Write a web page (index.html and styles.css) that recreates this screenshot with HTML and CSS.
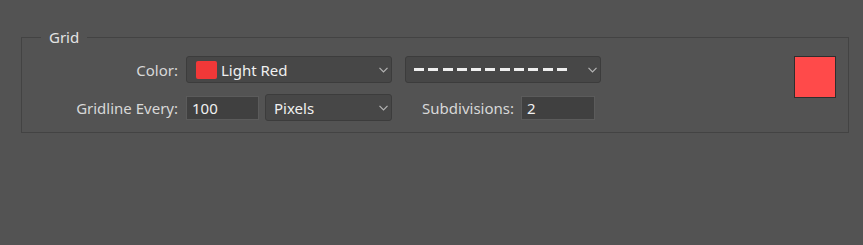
FILE: index.html
```html
<!DOCTYPE html>
<html lang="en">

<head>
    <meta charset="UTF-8">
    <title>Grid</title>
    <link rel="stylesheet" href="styles.css">
</head>

<body>
    <fieldset class="grid-box">
        <legend>Grid</legend>
        <div class="grid-body">
            <div class="grid-rows">
                <!-- 第一行：颜色和线型 -->
                <div class="row">
                    <label class="label">Color:</label>
                    <div class="select select-color">
                        <span class="chip"></span>
                        <span class="value">Light Red</span>
                        <svg class="chevron" width="9" height="6" viewBox="0 0 9 6"><path d="M0.5 0.8 L4.5 4.8 L8.5 0.8" fill="none" stroke="#b4b4b4" stroke-width="1.2"/></svg>
                    </div>
                    <div class="select select-style">
                        <span class="dashes"></span>
                        <svg class="chevron" width="9" height="6" viewBox="0 0 9 6"><path d="M0.5 0.8 L4.5 4.8 L8.5 0.8" fill="none" stroke="#b4b4b4" stroke-width="1.2"/></svg>
                    </div>
                </div>
                <!-- 第二行：间隔和细分 -->
                <div class="row">
                    <label class="label">Gridline Every:</label>
                    <div class="field field-every">100</div>
                    <div class="select select-unit">
                        <span class="value">Pixels</span>
                        <svg class="chevron" width="9" height="6" viewBox="0 0 9 6"><path d="M0.5 0.8 L4.5 4.8 L8.5 0.8" fill="none" stroke="#b4b4b4" stroke-width="1.2"/></svg>
                    </div>
                    <label class="label label-sub">Subdivisions:</label>
                    <div class="field field-sub">2</div>
                </div>
            </div>
            <div class="swatch"></div>
        </div>
    </fieldset>
</body>

</html>
```

FILE: styles.css
```css
/* 整体页面 */
body {
    margin: 0;
    padding: 0;
    background-color: #535353;
    font-family: "Noto Sans", "Open Sans", sans-serif;
    font-size: 15px;
    color: #d8d8d8;
}

/* 分组框 */
.grid-box {
    box-sizing: border-box;
    width: 828px;
    margin: 27px 0 0 21px;
    padding: 0;
    border: 1px solid #434343;
    min-inline-size: 0;
}

.grid-box legend {
    margin-left: 19px;
    padding: 0 8px;
    line-height: 20px;
    color: #e4e4e4;
}

.grid-body {
    display: flex;
    align-items: flex-start;
    padding: 9px 12px 11px 0;
}

.grid-rows {
    display: flex;
    flex-direction: column;
    gap: 11px;
}

.row {
    display: flex;
    align-items: center;
    height: 27px;
}

/* 标签 */
.label {
    width: 156px;
    margin-right: 8px;
    text-align: right;
    white-space: nowrap;
}

.label-sub {
    width: 122px;
    margin-right: 7px;
}

/* 下拉框 */
.select {
    box-sizing: border-box;
    height: 27px;
    display: flex;
    align-items: center;
    background-color: #474747;
    border: 1px solid #3c3c3c;
    border-radius: 3px;
    color: #f0f0f0;
}

.select .chevron {
    margin-left: auto;
    margin-right: 3px;
}

.select-color {
    width: 206px;
    padding-left: 9px;
}

.select-style {
    width: 196px;
    margin-left: 13px;
    padding-left: 8px;
}

.select-unit {
    width: 127px;
    margin-left: 6px;
    padding-left: 8px;
}

.chip {
    width: 21px;
    height: 18px;
    border-radius: 2px;
    background-color: #f23838;
    margin-right: 4px;
}

.dashes {
    width: 153px;
    height: 3px;
    background: repeating-linear-gradient(90deg, #eeeeee 0 10px, transparent 10px 14.3px);
}

/* 输入框 */
.field {
    box-sizing: border-box;
    height: 24px;
    line-height: 22px;
    padding-left: 5px;
    background-color: #404040;
    border: 1px solid #5b5b5b;
    color: #f0f0f0;
}

.field-every {
    width: 73px;
}

.field-sub {
    width: 74px;
}

/* 颜色预览块 */
.swatch {
    box-sizing: border-box;
    width: 42px;
    height: 42px;
    margin-left: auto;
    background-color: #ff4a4a;
    border: 1px solid #2e2e2e;
}
```
